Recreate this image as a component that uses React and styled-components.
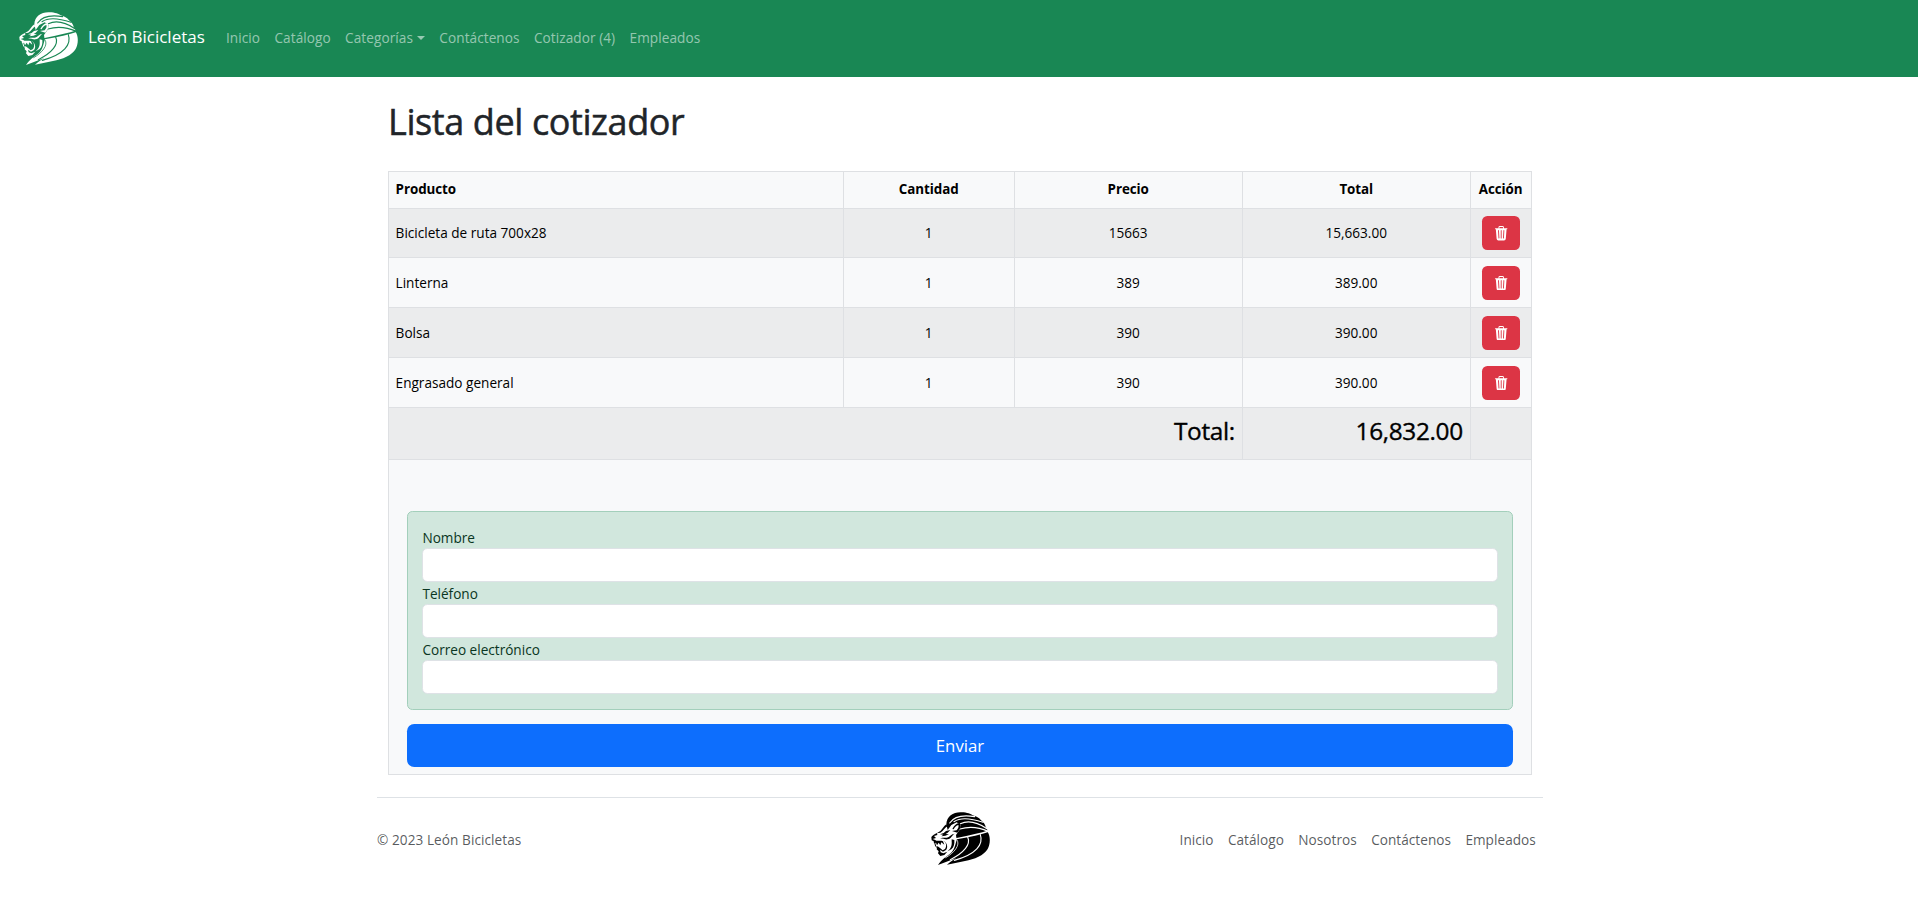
import React from "react";
import styled, { createGlobalStyle } from "styled-components";
import { BsTrash3Fill } from "react-icons/bs";

const GlobalStyle = createGlobalStyle`
  *, *::before, *::after { box-sizing: border-box; }
  body {
    margin: 0;
    background: #fff;
    color: #212529;
    font-family: "Open Sans", "Noto Sans", sans-serif;
    font-size: 13.6px;
    line-height: 21.6px;
  }
`;

const Navbar = styled.nav`
  display: flex;
  align-items: center;
  height: 77px;
  padding: 0 18px;
  background: #198754;
`;

const Brand = styled.a`
  display: flex;
  align-items: center;
  gap: 10px;
  margin-right: 14px;
  color: #fff;
  font-size: 17px;
  letter-spacing: 0;
  line-height: 27px;
  text-decoration: none;

  span { padding-bottom: 4px; }
`;

const NavLinks = styled.div`
  display: flex;
  padding-bottom: 1px;
`;

const NavLink = styled.a`
  display: flex;
  align-items: center;
  padding: 0 7.2px;
  color: rgba(255, 255, 255, 0.55);
  text-decoration: none;
  letter-spacing: 0.07px;
`;

const Caret = styled.i`
  margin-left: 4px;
  border-top: 4.3px solid;
  border-left: 4.3px solid transparent;
  border-right: 4.3px solid transparent;
`;

const Container = styled.div`
  width: 1166px;
  margin: 0 auto;
  transform: translateX(1px);
`;

const Main = styled.main`
  padding: 23px 11px 0;
`;

const Title = styled.h1`
  margin: 0 0 27px;
  font-size: 36px;
  font-weight: 500;
  letter-spacing: -0.4px;
  line-height: 43.5px;
  -webkit-text-stroke: 0.5px;
`;

const Table = styled.table`
  width: 1144px;
  border-collapse: collapse;
  table-layout: fixed;
  color: #000;
  background: #f8f9fa;
`;

const Row = styled.tr`
  height: ${(p) => p.$height}px;
  background: ${(p) => (p.$striped ? "#ebeced" : "#f8f9fa")};
`;

const Cell = styled.td`
  padding: 1px 7.2px 0 6.6px;
  border: 1px solid #dee0e3;
  text-align: ${(p) => p.$align || "left"};
  vertical-align: middle;
`;

const HeadCell = styled(Cell).attrs({ as: "th" })`
  font-weight: 700;
  font-size: 13.4px;
  white-space: nowrap;
  letter-spacing: -0.08px;
`;

const TotalCell = styled(Cell)`
  padding-bottom: 5px;
  font-size: 24.4px;
  font-weight: 500;
  letter-spacing: -0.35px;
  line-height: 30px;
  -webkit-text-stroke: 0.35px;
`;

const DeleteButton = styled.button`
  display: inline-flex;
  align-items: center;
  justify-content: center;
  width: 38px;
  height: 34px;
  padding: 1px 0 0;
  border: 0;
  border-radius: 5.4px;
  background: #dc3545;
  color: #fff;
  font-size: 14.4px;
  vertical-align: middle;
`;

const FormCell = styled(Cell)`
  padding: 51px 18px 7px;
`;

const Fieldset = styled.div`
  display: flex;
  flex-direction: column;
  height: 199px;
  padding: 15px 14.4px 14px;
  border: 1px solid #a3cfbb;
  border-radius: 5.4px;
  background: #d1e7dd;
  color: #0a3622;
`;

const Field = styled.label`
  display: block;
  height: 56px;
`;

const Input = styled.input`
  display: block;
  width: 100%;
  height: 34px;
  padding: 5px 11px;
  border: 1px solid #dee2e6;
  border-radius: 5.4px;
  background: #fff;
  font: inherit;
`;

const SubmitButton = styled.button`
  display: block;
  width: 100%;
  height: 43px;
  margin-top: 14px;
  padding: 0;
  border: 0;
  border-radius: 7.2px;
  background: #0d6efd;
  color: #fff;
  font-family: inherit;
  font-size: 16.8px;
`;

const Footer = styled.footer`
  display: grid;
  grid-template-columns: 1fr 60px 1fr;
  align-items: center;
  height: 84px;
  margin-top: 22px;
  border-top: 1px solid #dee2e6;
  color: rgba(33, 37, 41, 0.75);
`;

const Copyright = styled.span`
  padding-top: 1px;
  letter-spacing: 0.07px;
`;

const FooterLinks = styled.div`
  display: flex;
  justify-content: flex-end;
  padding-top: 1px;
`;

const FooterLink = styled.a`
  padding: 0 7.2px;
  color: inherit;
  text-decoration: none;
  letter-spacing: 0.04px;
`;

const LogoSvg = styled.svg`
  display: block;
  width: 60px;
  height: 54px;
  color: ${(p) => p.$ink};
`;

const Lion = ({ ink, gap }) => (
  <LogoSvg $ink={ink} viewBox="27 25 180 162" fill="none" aria-hidden="true">
    {/* mane */}
    <path
      fill="currentColor"
      d="M76 62C77 38 96 26 118 26C136 25 150 31 155 35C168 39 176 44 180 50C188 56 193 63 194 70C198 75 200 81 200 85C209 98 208 121 200 136C189 155 160 167 132 172L78 183C89 173 98 168 106 163L51 184C62 167 76 160 89 149C100 139 103 123 107 108L105 94L116 78L119 64L107 56L91 64L80 79Z"
    />
    {/* gaps between strands */}
    <g stroke={gap} strokeWidth="3.4" strokeLinecap="round">
      <path d="M86 58C98 40 125 33 161 39" />
      <path d="M99 54C115 43 145 42 186 56" />
      <path d="M118 60C140 50 165 53 198 75" />
      <path d="M117 76C145 67 175 71 202 83" strokeWidth="3.8" />
      <path d="M106 105C134 100 168 94 204 82" strokeWidth="4.4" />
      <path d="M140 100C150 122 130 147 88 168" />
      <path d="M178 93C188 122 166 152 100 170" />
      <path d="M108 109C119 124 99 148 74 162" strokeWidth="2.4" />
    </g>
    {/* ear */}
    <path fill="currentColor" d="M94 76C100 64 108 58 116 59C122 66 117 79 109 87L93 82L107 80C112 74 114 68 112 64C106 65 101 70 98 77Z" />
    {/* forehead, brow and eye */}
    <path fill="currentColor" d="M76 62C68 67 65 76 58 82L47 89L58 87C67 83 70 73 79 68Z" />
    <path fill="currentColor" d="M57 92L68 88L75 82L88 79L80 87L74 91L84 92L73 96L61 98L67 93Z" />
    {/* nose and muzzle */}
    <path fill="currentColor" d="M48 88C39 92 34 96 31 100L32 110L38 113L39 119L45 117L48 125L53 117L58 125L61 116L70 123L66 113C58 109 48 114 43 109L35 106L45 103L39 97L49 94Z" />
    <path fill="currentColor" d="M57 104C65 99 74 105 81 101C89 97 91 91 101 90C93 94 91 105 80 107C72 108 66 104 57 104Z" />
    {/* mouth, jaw and chin */}
    <path fill="currentColor" d="M68 111C76 117 78 127 72 136L65 140L58 134L49 127L47 137L53 143L51 149L58 157L70 154L79 144L67 149L59 146L57 138L66 144L75 139C82 130 78 117 68 111Z" />
    <path fill="currentColor" d="M92 112C93 125 91 133 80 143L91 137C99 130 101 120 100 109L92 107Z" />
    <path d="M41 116L44 128L49 132" stroke="currentColor" strokeWidth="3" />
  </LogoSvg>
);

const products = [
  { name: "Bicicleta de ruta 700x28", qty: 1, price: "15663", total: "15,663.00" },
  { name: "Linterna", qty: 1, price: "389", total: "389.00" },
  { name: "Bolsa", qty: 1, price: "390", total: "390.00" },
  { name: "Engrasado general", qty: 1, price: "390", total: "390.00" },
];

const rowHeights = [49, 50, 50, 50];

export default function App() {
  return (
    <>
      <GlobalStyle />
      <Navbar>
        <Brand>
          <Lion ink="#fff" gap="#198754" />
          <span>León Bicicletas</span>
        </Brand>
        <NavLinks>
          <NavLink>Inicio</NavLink>
          <NavLink>Catálogo</NavLink>
          <NavLink>Categorías<Caret /></NavLink>
          <NavLink>Contáctenos</NavLink>
          <NavLink>Cotizador (4)</NavLink>
          <NavLink>Empleados</NavLink>
        </NavLinks>
      </Navbar>
      <Container>
        <Main>
          <Title>Lista del cotizador</Title>
          <Table>
            <colgroup>
              <col width="455" />
              <col width="171" />
              <col width="228" />
              <col width="228" />
              <col width="61" />
            </colgroup>
            <tbody>
              <Row $height={37}>
                <HeadCell>Producto</HeadCell>
                <HeadCell $align="center">Cantidad</HeadCell>
                <HeadCell $align="center">Precio</HeadCell>
                <HeadCell $align="center">Total</HeadCell>
                <HeadCell $align="center">Acción</HeadCell>
              </Row>
              {products.map((p, i) => (
                <Row key={p.name} $height={rowHeights[i]} $striped={i % 2 === 0}>
                  <Cell>{p.name}</Cell>
                  <Cell $align="center">{p.qty}</Cell>
                  <Cell $align="center">{p.price}</Cell>
                  <Cell $align="center">{p.total}</Cell>
                  <Cell $align="center">
                    <DeleteButton aria-label="Eliminar"><BsTrash3Fill /></DeleteButton>
                  </Cell>
                </Row>
              ))}
              <Row $height={52} $striped>
                <TotalCell colSpan={3} $align="right">Total:</TotalCell>
                <TotalCell $align="right">16,832.00</TotalCell>
                <Cell />
              </Row>
              <Row $height={315}>
                <FormCell colSpan={5}>
                  <Fieldset>
                    <Field>Nombre<Input /></Field>
                    <Field>Teléfono<Input /></Field>
                    <Field>Correo electrónico<Input /></Field>
                  </Fieldset>
                  <SubmitButton>Enviar</SubmitButton>
                </FormCell>
              </Row>
            </tbody>
          </Table>
        </Main>
        <Footer>
          <Copyright>© 2023 León Bicicletas</Copyright>
          <Lion ink="#000" gap="#fff" />
          <FooterLinks>
            <FooterLink>Inicio</FooterLink>
            <FooterLink>Catálogo</FooterLink>
            <FooterLink>Nosotros</FooterLink>
            <FooterLink>Contáctenos</FooterLink>
            <FooterLink>Empleados</FooterLink>
          </FooterLinks>
        </Footer>
      </Container>
    </>
  );
}
